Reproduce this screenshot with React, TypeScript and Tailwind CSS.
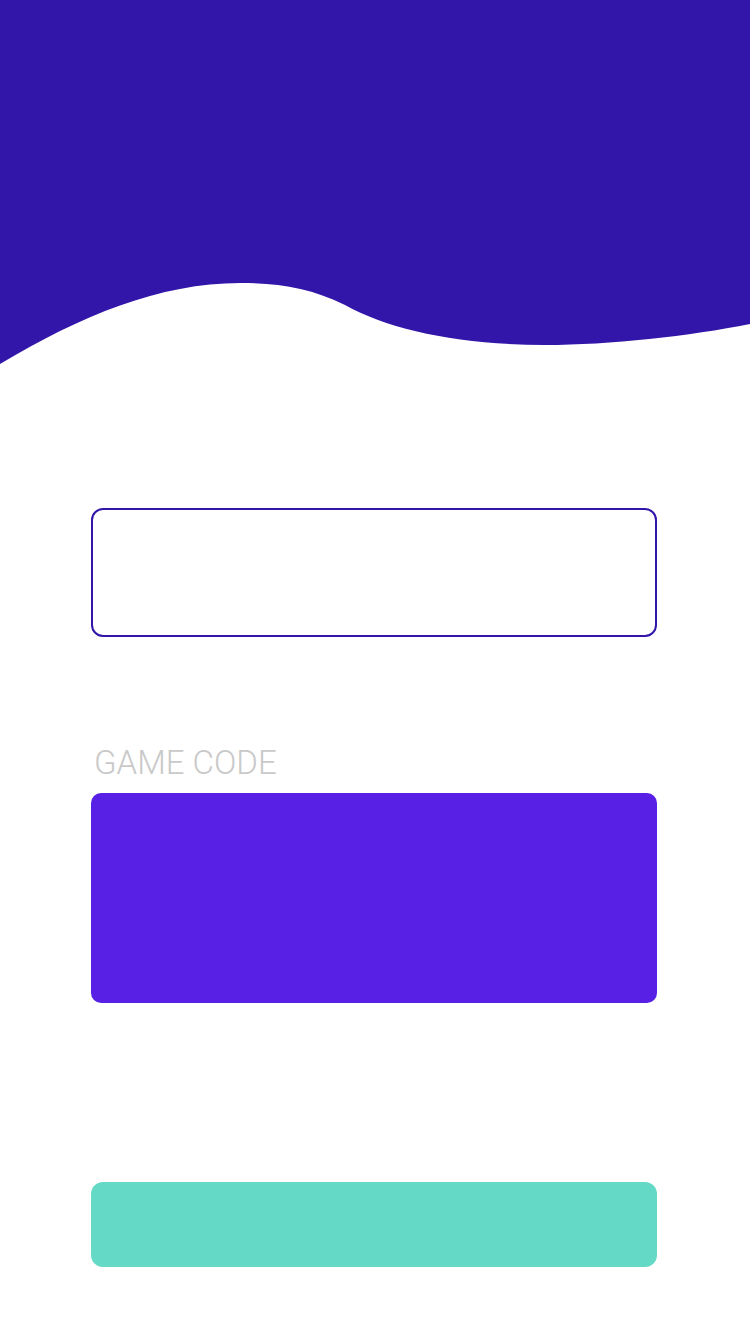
import React from 'react';

export default function App() {
  return (
    <div className="w-[750px] min-h-[1334px] bg-white" style={{ fontFamily: 'Roboto, "Liberation Sans", sans-serif' }}>
      {/* header wave */}
      <svg width="750" height="364" viewBox="0 0 750 364" className="block">
        <path
          d="M0,0 H750 V324 C690,336 610,345 545,345 C460,345 390,330 345,305 C310,288 280,283 240,283 C160,283 80,316 0,364 Z"
          fill="#3116a9"
        />
      </svg>

      <div className="ml-[91px] w-[566px] flex flex-col">
        <div className="mt-[144px] h-[129px] border-2 border-[#3116a9] rounded-[12px]" />

        <div className="mt-[109px] pl-[3px] text-[33px] leading-none font-light text-[#c9c9c9]">GAME CODE</div>

        <div className="mt-[14px] h-[210px] rounded-[10px] bg-[#5720e4]" />

        <div className="mt-[179px] h-[85px] rounded-[12px] bg-[#63d9c6]" />
      </div>
    </div>
  );
}
